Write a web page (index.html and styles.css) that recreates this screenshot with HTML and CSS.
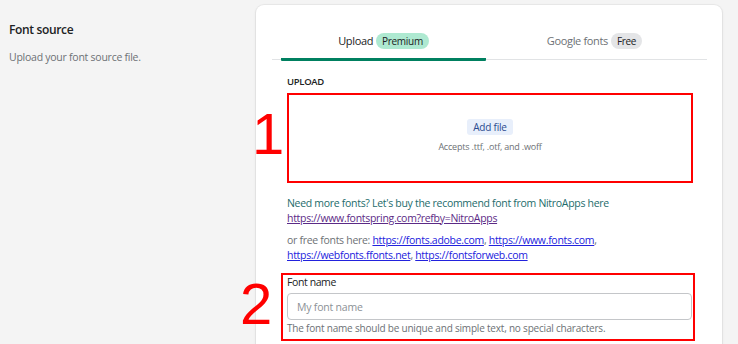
FILE: index.html
```html
<!DOCTYPE html>
<html lang="en">
<head>
<meta charset="utf-8">
<title>Font source</title>
<link rel="stylesheet" href="styles.css">
</head>
<body>
<div class="page">
  <div class="annotation">
    <h2 class="annotation-title">Font source</h2>
    <p class="annotation-desc">Upload your font source file.</p>
  </div>
  <div class="card">
    <div class="tabs">
      <div class="tab tab-active"><div class="tab-inner">Upload <span class="badge badge-success">Premium</span></div></div>
      <div class="tab"><div class="tab-inner">Google fonts <span class="badge">Free</span></div></div>
    </div>
    <div class="panel">
      <div class="label-upload">UPLOAD</div>
      <div class="marked">
        <span class="mark mark-1">1</span>
        <div class="dropzone">
          <span class="btn-add">Add file</span>
          <span class="accepts">Accepts .ttf, .otf, and .woff</span>
        </div>
      </div>
      <p class="info">Need more fonts? Let's buy the recommend font from NitroApps here <a class="visited" href="#">https://www.fontspring.com?refby=NitroApps</a></p>
      <p class="info info-muted">or free fonts here: <a href="#">https://fonts.adobe.com</a>, <a href="#">https://www.fonts.com</a>, <a href="#">https://webfonts.ffonts.net</a>, <a href="#">https://fontsforweb.com</a></p>
      <div class="marked">
        <span class="mark mark-2">2</span>
        <div class="field-box">
          <label class="field-label" for="fname">Font name</label>
          <input id="fname" class="field-input" type="text" placeholder="My font name">
          <div class="field-help">The font name should be unique and simple text, no special characters.</div>
        </div>
      </div>
    </div>
  </div>
</div>
</body>
</html>
```
FILE: styles.css
```css
* { box-sizing: border-box; }
html, body { margin: 0; padding: 0; }
body {
  background: #f4f4f4;
  font-family: "Open Sans", "Noto Sans", sans-serif;
  color: #202223;
  height: 344px;
  overflow: hidden;
}
.page {
  display: grid;
  grid-template-columns: 247px 466px;
  padding: 5px 0 0 9px;
}
.annotation { padding-top: 15px; }
.annotation-title {
  margin: 0;
  font-size: 12px;
  letter-spacing: -0.35px;
  font-weight: 600;
  line-height: 20px;
  color: #202223;
}
.annotation-desc {
  margin: 9px 0 0;
  font-size: 10.5px;
  letter-spacing: -0.25px;
  line-height: 16px;
  color: #6d7175;
}
.card {
  background: #fff;
  border-radius: 8px;
  box-shadow: 0 0 0 1px rgba(63,63,68,0.05), 0 1px 3px rgba(63,63,68,0.12);
  padding: 16px 15px 40px 16px;
  min-height: 400px;
}
.tabs {
  display: grid;
  grid-template-columns: 211px 211px;
  padding: 0 7px 0 6px;
  border-bottom: 1px solid #e1e3e5;
  height: 39px;
}
.tab { padding: 0 3px; }
.tab-inner {
  height: 40px;
  margin-bottom: -1px;
  border-bottom: 3px solid transparent;
  display: flex;
  align-items: center;
  justify-content: center;
  gap: 3px;
  padding-top: 2px;
  font-size: 11px;
  letter-spacing: -0.35px;
  color: #6d7175;
}
.tab-active .tab-inner {
  border-bottom-color: #008060;
  border-radius: 0 0 1px 1px;
  color: #202223;
}
.badge {
  display: inline-flex;
  align-items: center;
  height: 16px;
  padding: 0 6px;
  border-radius: 8px;
  background: #e4e5e7;
  font-size: 10px;
  letter-spacing: -0.3px;
  color: #202223;
}
.badge-success { background: #aee9d1; }
.panel { padding: 15px 0 0 15px; width: 421px; }
.label-upload {
  font-size: 9.5px;
  letter-spacing: -0.3px;
  font-weight: 600;
  line-height: 14px;
  color: #202223;
}
.marked { position: relative; }
.mark {
  position: absolute;
  font-family: "Liberation Sans", Arial, sans-serif;
  font-size: 58px;
  line-height: 1;
  color: #ff0000;
}
.mark-1 { left: -35px; top: 12px; }
.mark-2 { left: -47px; top: 2px; }
.dropzone {
  margin-top: 4px;
  height: 90px;
  width: 406px;
  border: 2px solid #ff0000;
  display: flex;
  flex-direction: column;
  align-items: center;
  justify-content: center;
  gap: 5px;
  padding-bottom: 4px;
}
.btn-add {
  background: #e8effb;
  color: #2a4a8f;
  font-size: 10px;
  letter-spacing: -0.2px;
  line-height: 16px;
  padding: 0 6px;
  border-radius: 3px;
}
.accepts {
  font-size: 9px;
  letter-spacing: -0.2px;
  color: #6d7175;
  line-height: 14px;
}
.info {
  margin: 13px 0 0;
  font-size: 10.5px;
  letter-spacing: -0.3px;
  line-height: 14.5px;
  color: #1d6b6b;
}
.info + .info { margin-top: 8px; }
.info-muted { color: #6d7175; }
.info a { color: #2222dd; }
.info a.visited { color: #5b2a86; }
.field-box {
  margin: 11px 0 0 -6px;
  width: 414px;
  height: 68px;
  border: 2px solid #ff0000;
  padding: 0 1px 0 4px;
}
.field-label {
  display: block;
  font-size: 10.5px;
  letter-spacing: -0.4px;
  line-height: 15px;
  color: #202223;
}
.field-input {
  display: block;
  margin-top: 3px;
  width: 405px;
  height: 27px;
  border: 1px solid #c4c6c9;
  border-radius: 4px;
  padding: 0 9px;
  font-family: "Open Sans", "Noto Sans", sans-serif;
  font-size: 10.5px;
  letter-spacing: -0.2px;
  color: #202223;
}
.field-input::placeholder { color: #8c9196; }
.field-help {
  margin-top: 1px;
  font-size: 10px;
  letter-spacing: -0.2px;
  line-height: 15px;
  color: #6d7175;
}
```
